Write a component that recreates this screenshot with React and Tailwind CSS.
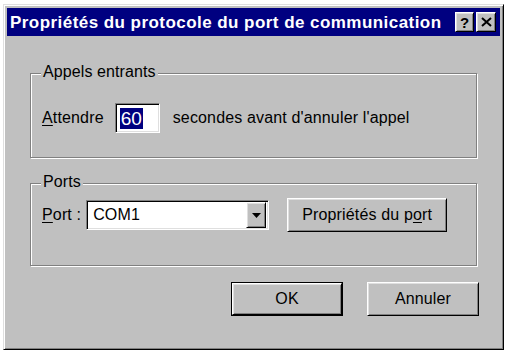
import React from "react";

const raised =
  "bg-[#c0c0c0] border border-t-white border-l-white border-r-black border-b-black shadow-[inset_1px_1px_0_#dfdfdf,inset_-1px_-1px_0_#808080]";
const sunken =
  "bg-white border border-t-[#808080] border-l-[#808080] border-r-white border-b-white shadow-[inset_1px_1px_0_#000,inset_-1px_-1px_0_#dfdfdf]";

function GroupBox({ label, className, children }) {
  return (
    <div
      className={
        "relative border border-[#808080] shadow-[inset_1px_1px_0_#fff,1px_1px_0_#fff] " +
        className
      }
    >
      <span className="absolute left-[10px] top-[-12px] bg-[#c0c0c0] px-[2px] text-[16px] leading-[20px] tracking-[0.1px] text-black">
        {label}
      </span>
      {children}
    </div>
  );
}

export default function App() {
  return (
    <div
      className="w-[506px] h-[351px] bg-white pl-[3px] pt-[4px] overflow-hidden"
      style={{ fontFamily: '"Liberation Sans", Arial, sans-serif' }}
    >
      <div className="w-[501px] h-[346px] bg-[#c0c0c0] border border-t-[#dfdfdf] border-l-[#dfdfdf] border-r-black border-b-black shadow-[inset_1px_1px_0_#fff,inset_-1px_-1px_0_#808080] p-[3px] flex flex-col">
        {/* Title bar */}
        <div className="h-[28px] bg-[#000080] flex items-center pl-[3px] pr-[4px]">
          <span className="flex-1 text-white font-bold text-[17px] leading-none tracking-[0.45px] whitespace-nowrap">
            Propriétés du protocole du port de communication
          </span>
          <div className="flex gap-[2px]">
            <div className={raised + " w-[19px] h-[20px] flex items-center justify-center"}>
              <span className="font-bold text-[15px] leading-none text-black">?</span>
            </div>
            <div className={raised + " w-[20px] h-[20px] flex items-center justify-center"}>
              <svg width="11" height="10" viewBox="0 0 11 10">
                <path d="M1 1 L10 9 M10 1 L1 9" stroke="#000" strokeWidth="2" />
              </svg>
            </div>
          </div>
        </div>

        {/* Content */}
        <div className="flex flex-col px-[23px] text-[16px] tracking-[0.15px] text-black">
          <GroupBox label="Appels entrants" className="mt-[37px] h-[85px]">
            <div className="flex items-center pl-[11px] pt-[29px]">
              <span>
                <u className="underline-offset-2">A</u>ttendre
              </span>
              <div className={sunken + " ml-[11px] w-[45px] h-[30px] flex items-center pl-[4px]"}>
                <span className="bg-[#000080] text-white text-[19px] leading-[21px] px-[1px] tracking-normal">60</span>
              </div>
              <span className="ml-[13px]">secondes avant d'annuler l'appel</span>
            </div>
          </GroupBox>

          <GroupBox label="Ports" className="mt-[25px] h-[83px]">
            <div className="flex items-center pl-[11px] pt-[14px]">
              <span>
                <u className="underline-offset-2">P</u>ort :
              </span>
              <div className={sunken + " ml-[5px] w-[183px] h-[30px] flex items-center pl-[6px] pr-[2px]"}>
                <span className="flex-1">COM1</span>
                <div className={raised + " w-[20px] h-[26px] flex items-center justify-center"}>
                  <svg width="9" height="5" viewBox="0 0 9 5">
                    <path d="M0 0 H9 L4.5 5 Z" fill="#000" />
                  </svg>
                </div>
              </div>
              <div className={raised + " ml-[18px] w-[160px] h-[34px] flex items-center justify-center"}>
                <span>
                  Propriétés du p<u className="underline-offset-2">o</u>rt
                </span>
              </div>
            </div>
          </GroupBox>

          <div className="flex justify-end gap-[24px] mt-[16px] mr-[-2px]">
            <div className="w-[112px] h-[34px] border border-black">
              <div className={raised + " w-full h-full flex items-center justify-center"}>
                OK
              </div>
            </div>
            <div className={raised + " w-[112px] h-[34px] flex items-center justify-center"}>
              Annuler
            </div>
          </div>
        </div>
      </div>
    </div>
  );
}
